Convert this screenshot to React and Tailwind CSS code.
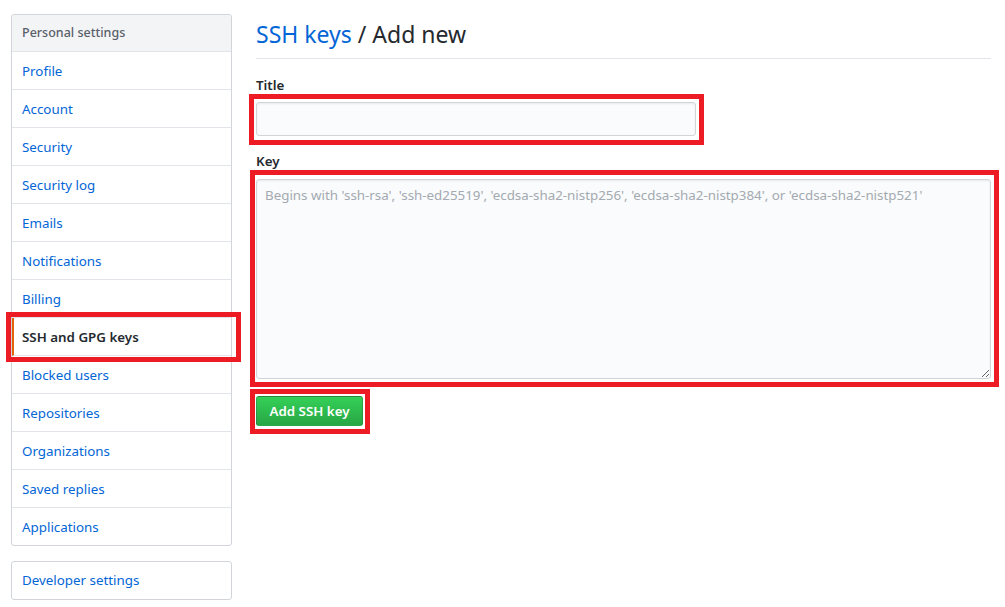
import React from "react";

const items = [
  "Profile",
  "Account",
  "Security",
  "Security log",
  "Emails",
  "Notifications",
  "Billing",
  "SSH and GPG keys",
  "Blocked users",
  "Repositories",
  "Organizations",
  "Saved replies",
  "Applications",
];

function RedBox({ className }) {
  return (
    <span
      className={
        "pointer-events-none absolute border-[5px] border-[#ed1c24] " + className
      }
    />
  );
}

export default function App() {
  return (
    <div
      className="w-[1005px] h-[607px] bg-white text-[13.35px] text-[#24292e] overflow-hidden"
      style={{ fontFamily: '"Noto Sans", "Open Sans", sans-serif' }}
    >
      <div className="flex pt-[14px] pl-[11px] gap-[24px]">
        {/* Sidebar */}
        <div className="w-[221px] shrink-0">
          <nav className="border border-[#d1d5da] rounded-[3px] bg-white">
            <div className="h-[37px] flex items-center px-[10px] pt-[1px] bg-[#f3f4f6] border-b border-[#e1e4e8] text-[12.5px] text-[#586069] font-medium rounded-t-[3px]">
              Personal settings
            </div>
            {items.map((it, i) => {
              const selected = it === "SSH and GPG keys";
              const last = i === items.length - 1;
              return (
                <div
                  key={it}
                  className={
                    "relative flex items-center pt-[1px] " +
                    (last ? "h-[37px] " : "h-[38px] border-b border-[#e1e4e8] ") +
                    (selected
                      ? "text-[#24292e] font-semibold border-l-2 border-l-[#e36209] pl-[8px]"
                      : "text-[#0366d6] pl-[10px]")
                  }
                >
                  {it}
                  {selected && (
                    <RedBox className="-left-[8px] -right-[10px] -top-[6px] -bottom-[7px]" />
                  )}
                </div>
              );
            })}
          </nav>
          <div className="mt-[15px] h-[39px] border border-[#d1d5da] rounded-[3px] flex items-center px-[10px] text-[#0366d6]">
            Developer settings
          </div>
        </div>

        {/* Main */}
        <div className="w-[735px] pt-[5px]">
          <h2 className="text-[23px] leading-[30px] font-normal pb-[9px] border-b border-[#e1e4e8]">
            <span className="text-[#0366d6]">SSH keys</span>
            <span> / Add new</span>
          </h2>
          <div className="mt-[16px]">
            <div className="font-semibold leading-[21px]">Title</div>
            <div className="relative mt-[6px] w-[440px]">
              <input
                className="block w-full h-[34px] bg-[#fafbfc] border border-[#d1d5da] rounded-[3px] shadow-[inset_0_1px_2px_rgba(27,31,35,0.075)] outline-none px-[8px]"
                type="text"
              />
              <RedBox className="-left-[7px] -right-[8px] -top-[8px] -bottom-[9px]" />
            </div>
          </div>
          <div className="mt-[15px]">
            <div className="font-semibold leading-[21px]">Key</div>
            <div className="relative mt-[7px] w-[735px]">
              <textarea
                className="block w-full h-[200px] bg-[#fafbfc] border border-[#d1d5da] rounded-[3px] shadow-[inset_0_1px_2px_rgba(27,31,35,0.075)] outline-none px-[8px] pt-[5px] leading-[21px] text-[13.35px] placeholder:text-[#a3aab1] resize"
                placeholder="Begins with 'ssh-rsa', 'ssh-ed25519', 'ecdsa-sha2-nistp256', 'ecdsa-sha2-nistp384', or 'ecdsa-sha2-nistp521'"
              />
              <RedBox className="-left-[6px] -right-[8px] -top-[9px] -bottom-[8px]" />
            </div>
          </div>
          <div className="relative mt-[17px] inline-block">
            <button className="h-[30px] w-[107px] rounded-[3px] border border-[rgba(27,31,35,0.2)] bg-gradient-to-b from-[#34d058] to-[#28a745] text-white font-semibold text-[13.35px] flex items-center justify-center">
              Add SSH key
            </button>
            <RedBox className="-left-[6px] -right-[7px] -top-[7px] -bottom-[8px]" />
          </div>
        </div>
      </div>
    </div>
  );
}
